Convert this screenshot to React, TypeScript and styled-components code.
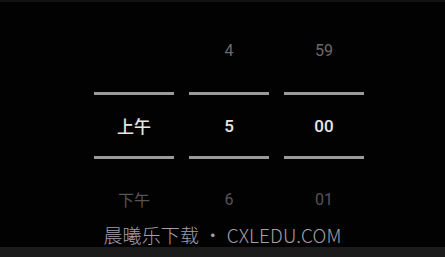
import React from "react";
import styled, { createGlobalStyle } from "styled-components";

const Global = createGlobalStyle`
  html, body { margin: 0; padding: 0; background: #000; }
  body { width: 445px; height: 257px; overflow: hidden; }
`;

const Page = styled.div`
  position: relative;
  width: 445px;
  height: 257px;
  background: #020202;
  display: flex;
  flex-direction: column;
  font-family: Roboto, "Noto Sans CJK SC", sans-serif;
`;

const TopStrip = styled.div`
  height: 2px;
  background: #121212;
`;

const Picker = styled.div`
  flex: 1;
  display: flex;
  gap: 15px;
  padding-left: 94px;
`;

const Column = styled.div`
  width: 80px;
  display: flex;
  flex-direction: column;
`;

const Cell = styled.div<{ $h: number; $top: number; $variant: "dim" | "sel" | "dimmer" }>`
  height: ${(p) => p.$h}px;
  margin-top: ${(p) => p.$top}px;
  display: flex;
  align-items: center;
  justify-content: center;
  font-size: ${(p) => (p.$variant === "sel" ? 17 : 16)}px;
  font-weight: ${(p) => (p.$variant === "sel" ? 500 : 400)};
  color: ${(p) => (p.$variant === "sel" ? "#e6e6e6" : p.$variant === "dim" ? "#6a6a6a" : "#555")};
`;

const Divider = styled.div<{ $top?: number }>`
  height: 3px;
  margin-top: ${(p) => p.$top ?? 0}px;
  background: #9a9a9a;
`;

const BottomBar = styled.div`
  height: 10px;
  background: #1b1b1b;
`;

const Watermark = styled.div`
  position: absolute;
  left: 0;
  right: 0;
  top: 222px;
  text-align: center;
  font-family: "Noto Sans CJK SC", sans-serif;
  font-size: 19px;
  line-height: 26px;
  font-weight: 300;
  color: #a59eab;
  letter-spacing: 0.1px;
`;

const cols = [
  ["", "上午", "下午"],
  ["4", "5", "6"],
  ["59", "00", "01"],
];

export default function App() {
  return (
    <Page>
      <Global />
      <TopStrip />
      <Picker>
        {cols.map((c, i) => (
          <Column key={i}>
            <Cell $h={40} $top={28} $variant="dim">{c[0]}</Cell>
            <Divider $top={22} />
            <Cell $h={61} $top={0} $variant="sel">{c[1]}</Cell>
            <Divider />
            <Cell $h={40} $top={20} $variant="dimmer">{c[2]}</Cell>
          </Column>
        ))}
      </Picker>
      <BottomBar />
      <Watermark>晨曦乐下载 • CXLEDU.COM</Watermark>
    </Page>
  );
}
